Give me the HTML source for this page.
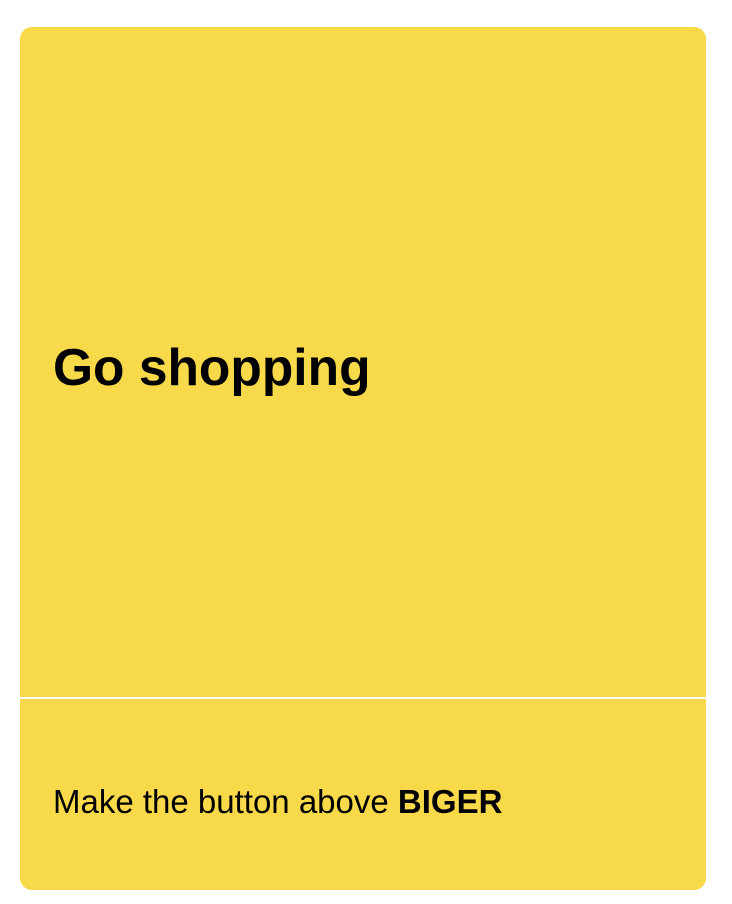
<!DOCTYPE html>
<html><head><meta charset="utf-8"><style>
html,body{margin:0;padding:0;background:#fff;width:732px;height:904px;overflow:hidden}
.card{position:absolute;left:20px;top:27px;width:686px;height:863px;background:#F8D949;border-radius:12px;overflow:hidden;font-family:"Liberation Sans",sans-serif;color:#000}
.div{position:absolute;left:0;top:670px;width:686px;height:2px;background:#fff}
.h{position:absolute;left:33px;top:310px;font-size:51.5px;font-weight:bold;line-height:60px;white-space:nowrap}
.t{position:absolute;left:33px;top:757px;font-size:33px;line-height:36px;white-space:nowrap}
</style></head><body>
<div class="card">
<div class="h">Go shopping</div>
<div class="div"></div>
<div class="t">Make the button above <b>BIGER</b></div>
</div>
</body></html>
